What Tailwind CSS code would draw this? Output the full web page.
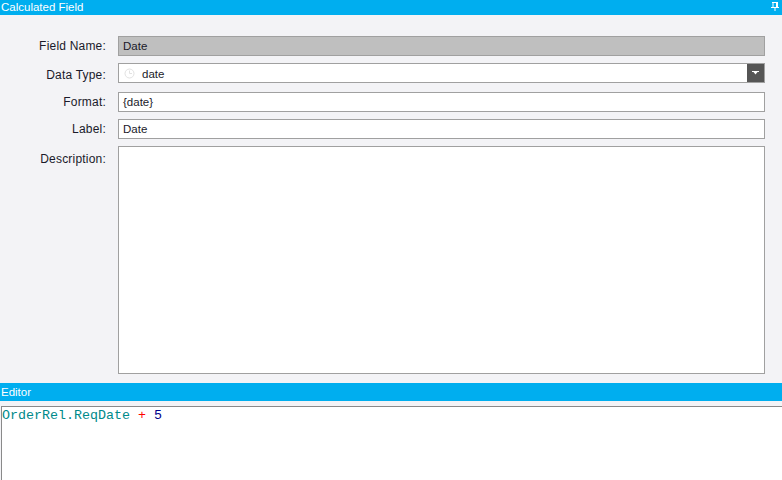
<!DOCTYPE html>
<html lang="en">
<head>
    <meta charset="UTF-8">
    <title>Calculated Field</title>
    <script src="https://cdn.jsdelivr.net/npm/@tailwindcss/browser@4"></script>
</head>
<body class="w-[782px] h-[480px] overflow-hidden bg-[#f3f3f6] font-['Liberation_Sans',Arial,sans-serif] text-[11.5px] text-[#1a1a2a]">
    <!-- Calculated field panel -->
    <div class="h-[15px] bg-[#00aeef] text-white flex items-center justify-between leading-[12px]">
        <span class="pl-px mb-px">Calculated Field</span>
        <svg class="mr-[3px] mb-[3px]" width="8" height="9" viewBox="0 0 8 9" fill="none">
            <path d="M1 .5H7M2 .5V5M5.5 .5V5M0 5.5H8M4 6V9" stroke="#fff" stroke-width="1"/>
            <path d="M5 1H7V5H5Z" fill="#fff"/>
        </svg>
    </div>

    <div class="h-[368px] pt-[21px] pl-[17px] pr-[17px] flex flex-col gap-[8px]">
        <div class="flex h-[20px]">
            <label class="w-[89px] text-[12px] tracking-[0.2px] text-right leading-[21px] shrink-0">Field Name:</label>
            <div class="ml-[12px] flex-1 h-[20px] border border-[#a0a0a0] bg-[#bfbfbf] pl-[4px] leading-[18px]">Date</div>
        </div>
        <div class="flex h-[20px] mt-[-1px]">
            <label class="w-[89px] text-[12px] tracking-[0.2px] text-right leading-[24px] shrink-0">Data Type:</label>
            <div class="ml-[12px] flex-1 h-[20px] border border-[#a0a0a0] bg-white flex items-center">
                <svg class="ml-[5px]" width="11" height="11" viewBox="0 0 11 11" fill="none">
                    <circle cx="5.5" cy="5.5" r="4.5" stroke="#e2e2e2"/>
                    <path d="M5.5 2.5V5.5H8" stroke="#e2e2e2"/>
                </svg>
                <span class="ml-[7px] flex-1 leading-[18px] pt-px">date</span>
                <div class="w-[17px] h-[18px] bg-[#555555] flex items-center justify-center">
                    <svg width="7" height="4" viewBox="0 0 7 4"><path d="M0 0H7V1H5.5L3.5 3.5L1.5 1H0Z" fill="#fff"/></svg>
                </div>
            </div>
        </div>
        <div class="flex h-[20px] mt-[1px]">
            <label class="w-[89px] text-[12px] tracking-[0.2px] text-right leading-[20px] shrink-0">Format:</label>
            <div class="ml-[12px] flex-1 h-[20px] border border-[#a0a0a0] bg-white pl-[4px] leading-[18px]">{date}</div>
        </div>
        <div class="flex h-[20px] mt-[-1px]">
            <label class="w-[89px] text-[12px] tracking-[0.2px] text-right leading-[20px] shrink-0">Label:</label>
            <div class="ml-[12px] flex-1 h-[20px] border border-[#a0a0a0] bg-white pl-[4px] leading-[18px]">Date</div>
        </div>
        <div class="flex h-[228px] mt-[-1px]">
            <label class="w-[89px] text-[12px] tracking-[0.2px] text-right leading-[27px] shrink-0">Description:</label>
            <div class="ml-[12px] flex-1 border border-[#a0a0a0] bg-white"></div>
        </div>
    </div>

    <!-- Editor panel -->
    <div class="h-[18px] bg-[#00aeef] text-white pl-px leading-[18px]">Editor</div>
    <div class="h-[5px]"></div>
    <div class="h-[74px] border-t border-l border-[#8a8a8a] ml-[1px] bg-white font-['Liberation_Mono','Courier_New',monospace] text-[13.33px] leading-[15px] pt-px">
        <span class="text-[#008a8a]">OrderRel.ReqDate</span> <span class="text-[#ff0000]">+</span> <span class="text-[#00008b]">5</span>
    </div>
</body>
</html>
